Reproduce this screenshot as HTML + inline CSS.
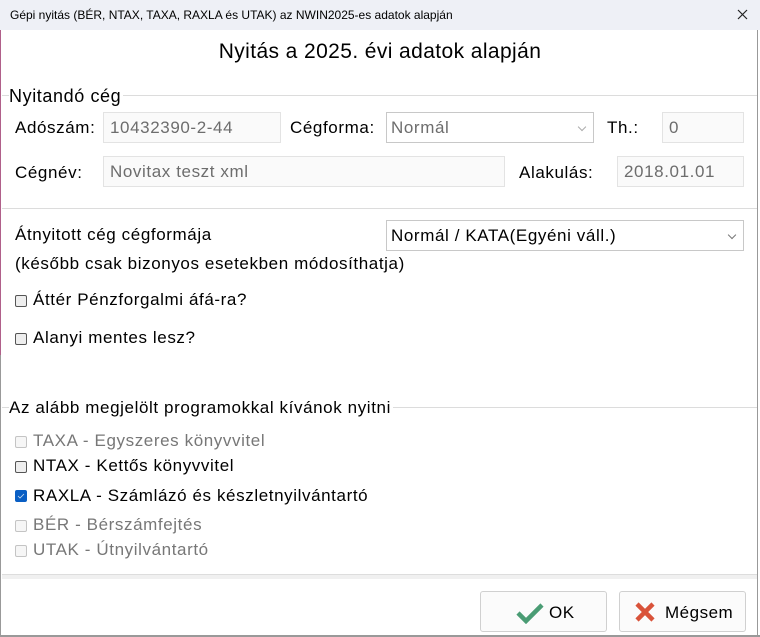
<!DOCTYPE html>
<html><head><meta charset="utf-8"><style>
*{margin:0;padding:0;box-sizing:border-box}
body{width:760px;height:637px;background:#fff;font-family:"Liberation Sans",sans-serif;position:relative;overflow:hidden;color:#000}
.a{position:absolute;white-space:nowrap}
.l{font-size:17px;letter-spacing:0.6px}
.inp{position:absolute;border:1px solid #e3e3e3;background:#fafafa;color:#6d6d6d;font-size:17px;letter-spacing:0.6px;padding:5px 0 0 6px}
.sel{position:absolute;border:1px solid #c8c8c8;background:#fff;font-size:17px;letter-spacing:0.6px;padding:5px 0 0 4px}
.chev{position:absolute;right:8px;top:11px;width:6px;height:6px;border-right:1px solid #777;border-bottom:1px solid #777;transform:rotate(45deg)}
.cb{position:absolute;width:12px;height:12px;border:1px solid #555;border-radius:2px;background:#eee}
.cb.d{border-color:#c4c4c4;background:#f6f6f6}
.line{position:absolute;height:1px;background:#dcdcdc}
.btn{position:absolute;border:1px solid #d0d0d0;border-radius:3px;background:#fbfbfb;font-size:17px;letter-spacing:0.5px}
</style></head><body>
<div class="a" style="left:0;top:0;width:760px;height:30px;background:#eef0f6"></div>
<div class="a" style="left:10px;top:8px;font-size:12px">Gépi nyitás (BÉR, NTAX, TAXA, RAXLA és UTAK) az NWIN2025-es adatok alapján</div>
<svg class="a" style="left:737px;top:9px" width="11" height="11"><path d="M1 1L10 10M10 1L1 10" stroke="#222" stroke-width="1.2"/></svg>
<div class="a" style="left:0;top:30px;width:1px;height:325px;background:#b0608a"></div>
<div class="a" style="left:0;top:355px;width:1px;height:282px;background:#999"></div>
<div class="a" style="left:757px;top:30px;width:1px;height:607px;background:#999"></div>
<div class="a" style="left:0;top:635px;width:760px;height:2px;background:#999"></div>
<div class="a" style="left:0;top:40px;width:760px;text-align:center;font-size:21px;letter-spacing:0.4px">Nyitás a 2025. évi adatok alapján</div>

<div class="line" style="left:2px;top:95px;width:755px"></div>
<div class="a l" style="left:9px;top:86px;background:#fff;padding-right:2px;font-size:18px">Nyitandó cég</div>
<div class="a l" style="left:15px;top:118px">Adószám:</div>
<div class="inp" style="left:103px;top:112px;width:178px;height:31px">10432390-2-44</div>
<div class="a l" style="left:290px;top:118px">Cégforma:</div>
<div class="sel" style="left:386px;top:112px;width:208px;height:31px;color:#6d6d6d">Normál<div class="chev" style="border-color:#aaa"></div></div>
<div class="a l" style="left:607px;top:118px">Th.:</div>
<div class="inp" style="left:662px;top:112px;width:82px;height:31px">0</div>
<div class="a l" style="left:15px;top:163px">Cégnév:</div>
<div class="inp" style="left:103px;top:156px;width:402px;height:31px">Novitax teszt xml</div>
<div class="a l" style="left:519px;top:163px">Alakulás:</div>
<div class="inp" style="left:617px;top:156px;width:127px;height:31px">2018.01.01</div>

<div class="line" style="left:2px;top:208px;width:755px"></div>
<div class="a l" style="left:15px;top:225px">Átnyitott cég cégformája</div>
<div class="a l" style="left:15px;top:254px">(később csak bizonyos esetekben módosíthatja)</div>
<div class="sel" style="left:386px;top:220px;width:358px;height:31px">Normál / KATA(Egyéni váll.)<div class="chev"></div></div>
<div class="cb" style="left:15px;top:295px"></div><div class="a l" style="left:33px;top:290px">Áttér Pénzforgalmi áfá-ra?</div>
<div class="cb" style="left:15px;top:333px"></div><div class="a l" style="left:33px;top:328px">Alanyi mentes lesz?</div>

<div class="line" style="left:2px;top:407px;width:755px"></div>
<div class="a l" style="left:9px;top:398px;background:#fff;padding-right:2px">Az alább megjelölt programokkal kívánok nyitni</div>
<div class="cb d" style="left:15px;top:436px"></div><div class="a l" style="left:33px;top:431px;color:#777">TAXA - Egyszeres könyvvitel</div>
<div class="cb" style="left:15px;top:461px"></div><div class="a l" style="left:33px;top:456px">NTAX - Kettős könyvvitel</div>
<div class="cb" style="left:15px;top:490px;background:#0a5fc4;border-color:#0a5fc4"><svg width="10" height="10" style="position:absolute;left:0;top:0"><path d="M2 5L4 7L8 3" stroke="#cde" fill="none" stroke-width="0.8"/></svg></div><div class="a l" style="left:33px;top:486px">RAXLA - Számlázó és készletnyilvántartó</div>
<div class="cb d" style="left:15px;top:520px"></div><div class="a l" style="left:33px;top:515px;color:#777">BÉR - Bérszámfejtés</div>
<div class="cb d" style="left:15px;top:545px"></div><div class="a l" style="left:33px;top:540px;color:#777">UTAK - Útnyilvántartó</div>

<div class="a" style="left:2px;top:574px;width:755px;height:1px;background:#ddd"></div>
<div class="a" style="left:2px;top:575px;width:755px;height:4px;background:#f0f0f0"></div>
<div class="btn" style="left:480px;top:591px;width:127px;height:41px">
<svg class="a" style="left:35px;top:10px" width="28" height="22"><path d="M2 11L10 19L26 3" stroke="#4a9c74" stroke-width="4.5" fill="none"/></svg>
<div class="a" style="left:68px;top:11px">OK</div></div>
<div class="btn" style="left:619px;top:591px;width:127px;height:41px">
<svg class="a" style="left:14px;top:9px" width="22" height="22"><path d="M3 3L19 19M19 3L3 19" stroke="#d9533a" stroke-width="4.5"/></svg>
<div class="a" style="left:45px;top:11px">Mégsem</div></div>
</body></html>
